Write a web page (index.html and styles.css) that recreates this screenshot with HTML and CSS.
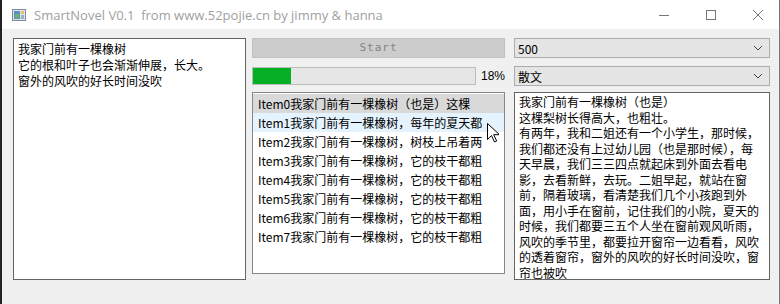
FILE: index.html
```html
<!DOCTYPE html>
<html lang="zh">
<head>
    <meta charset="UTF-8">
    <title>SmartNovel V0.1</title>
    <link rel="stylesheet" href="styles.css">
</head>
<body>
    <div class="window">
        <div class="titlebar">
            <svg class="app-icon" width="14" height="12" viewBox="0 0 14 12">
                <rect x="0.5" y="0.5" width="13" height="11" fill="#dfe6ee" stroke="#7d8a99"/>
                <rect x="2" y="2" width="6" height="8" fill="#5a8fc4"/>
                <rect x="3" y="5" width="4" height="4" fill="#6bb36b"/>
                <rect x="9" y="2" width="3" height="3" fill="#e7c35a"/>
                <rect x="9" y="6" width="3" height="4" fill="#9ab0c8"/>
            </svg>
            <span class="title">SmartNovel V0.1&nbsp; from www.52pojie.cn by jimmy &amp; hanna</span>
            <div class="controls">
                <svg width="12" height="12" viewBox="0 0 12 12"><path d="M1 6.5h10" stroke="#777" stroke-width="1"/></svg>
                <svg width="12" height="12" viewBox="0 0 12 12"><rect x="1.5" y="1.5" width="9" height="9" fill="none" stroke="#777"/></svg>
                <svg width="12" height="12" viewBox="0 0 12 12"><path d="M1 1l10 10M11 1L1 11" stroke="#777" stroke-width="1"/></svg>
            </div>
        </div>

        <div class="content">
            <div class="textbox left-box">
                <div>我家门前有一棵橡树</div>
                <div>它的根和叶子也会渐渐伸展，长大。</div>
                <div>窗外的风吹的好长时间没吹</div>
            </div>

            <div class="middle">
                <div class="start-btn">Start</div>
                <div class="progress-row">
                    <div class="progress"><div class="progress-fill" style="width: 17%"></div></div>
                    <span class="percent">18%</span>
                </div>
                <div class="list">
                    <div class="item selected">Item0我家门前有一棵橡树（也是）这棵</div>
                    <div class="item hover">Item1我家门前有一棵橡树，每年的夏天都</div>
                    <div class="item">Item2我家门前有一棵橡树，树枝上吊着两</div>
                    <div class="item">Item3我家门前有一棵橡树，它的枝干都粗</div>
                    <div class="item">Item4我家门前有一棵橡树，它的枝干都粗</div>
                    <div class="item">Item5我家门前有一棵橡树，它的枝干都粗</div>
                    <div class="item">Item6我家门前有一棵橡树，它的枝干都粗</div>
                    <div class="item">Item7我家门前有一棵橡树，它的枝干都粗</div>
                    <svg class="cursor" width="12" height="20" viewBox="0 0 12 20">
                        <path d="M0.5 0.5v16l4-4 3 6.5 2.2-1-3-6.3h5.8z" fill="#fff" stroke="#000" stroke-width="1"/>
                    </svg>
                </div>
            </div>

            <div class="right">
                <div class="combo"><span>500</span><svg width="10" height="6" viewBox="0 0 10 6"><path d="M1 1l4 4 4-4" fill="none" stroke="#444"/></svg></div>
                <div class="combo"><span>散文</span><svg width="10" height="6" viewBox="0 0 10 6"><path d="M1 1l4 4 4-4" fill="none" stroke="#444"/></svg></div>
                <div class="textbox right-box">
                    <div>我家门前有一棵橡树（也是）</div>
                    <div>这棵梨树长得高大，也粗壮。</div>
                    <div>有两年，我和二姐还有一个小学生，那时候，</div>
                    <div>我们都还没有上过幼儿园（也是那时候），每</div>
                    <div>天早晨，我们三三四点就起床到外面去看电</div>
                    <div>影，去看新鲜，去玩。二姐早起，就站在窗</div>
                    <div>前，隔着玻璃，看清楚我们几个小孩跑到外</div>
                    <div>面，用小手在窗前，记住我们的小院，夏天的</div>
                    <div>时候，我们都要三五个人坐在窗前观风听雨，</div>
                    <div>风吹的季节里，都要拉开窗帘一边看看，风吹</div>
                    <div>的透着窗帘，窗外的风吹的好长时间没吹，窗</div>
                    <div>帘也被吹</div>
                </div>
            </div>
        </div>
    </div>
</body>
</html>
```

FILE: styles.css
```css
body {
    margin: 0;
    font-family: "Noto Sans CJK SC", "Noto Sans", sans-serif;
    font-size: 12px;
    color: #000;
}

.window {
    width: 780px;
    height: 304px;
    box-sizing: border-box;
    background: #f0f0f0;
    border-left: 2px solid #222;
    border-right: 1px solid #777;
    display: flex;
    flex-direction: column;
}

.titlebar {
    height: 29px;
    background: #fff;
    display: flex;
    align-items: center;
    padding-left: 10px;
}

.app-icon {
    margin-right: 8px;
}

.title {
    font-family: "Open Sans", "Noto Sans", sans-serif;
    font-size: 13px;
    color: #a0a0a0;
    flex: 1;
}

.controls {
    display: flex;
    gap: 35px;
    margin-right: 15px;
}

.content {
    display: flex;
    padding: 9px 0 0 11px;
}

.textbox {
    background: #fff;
    box-sizing: border-box;
    line-height: 16px;
    white-space: nowrap;
}

.left-box {
    width: 233px;
    height: 242px;
    border: 1px solid #646464;
    padding: 2px 4px;
}

.middle {
    width: 253px;
    margin-left: 6px;
    display: flex;
    flex-direction: column;
}

.start-btn {
    height: 20px;
    box-sizing: border-box;
    background: #cccccc;
    border: 1px solid #bfbfbf;
    color: #838383;
    font-family: "DejaVu Sans Mono", monospace;
    font-size: 11px;
    letter-spacing: 1px;
    text-align: center;
    line-height: 18px;
}

.progress-row {
    display: flex;
    align-items: center;
    margin-top: 9px;
}

.progress {
    width: 226px;
    height: 18px;
    box-sizing: border-box;
    border: 1px solid #bcbcbc;
    background: #e6e6e6;
}

.progress-fill {
    height: 100%;
    background: #06b025;
}

.percent {
    margin-left: 5px;
    font-family: "Liberation Sans", sans-serif;
    font-size: 12px;
}

.list {
    position: relative;
    margin-top: 7px;
    height: 182px;
    box-sizing: border-box;
    border: 1px solid #828790;
    background: #fff;
    padding-top: 1px;
}

.item {
    height: 19px;
    line-height: 19px;
    padding-left: 5px;
    white-space: nowrap;
    overflow: hidden;
}

.item.selected {
    background: #d9d9d9;
}

.item.hover {
    background: #e5f3ff;
}

.cursor {
    position: absolute;
    left: 234px;
    top: 30px;
}

.right {
    width: 256px;
    margin-left: 9px;
    display: flex;
    flex-direction: column;
}

.combo {
    height: 20px;
    box-sizing: border-box;
    background: #e5e5e5;
    border: 1px solid #adadad;
    display: flex;
    align-items: center;
    justify-content: space-between;
    padding: 0 6px 0 3px;
}

.combo + .combo {
    margin-top: 8px;
}

.right-box {
    margin-top: 6px;
    height: 188px;
    border: 1px solid #646464;
    padding: 1px 4px;
    line-height: 15.5px;
}
```
